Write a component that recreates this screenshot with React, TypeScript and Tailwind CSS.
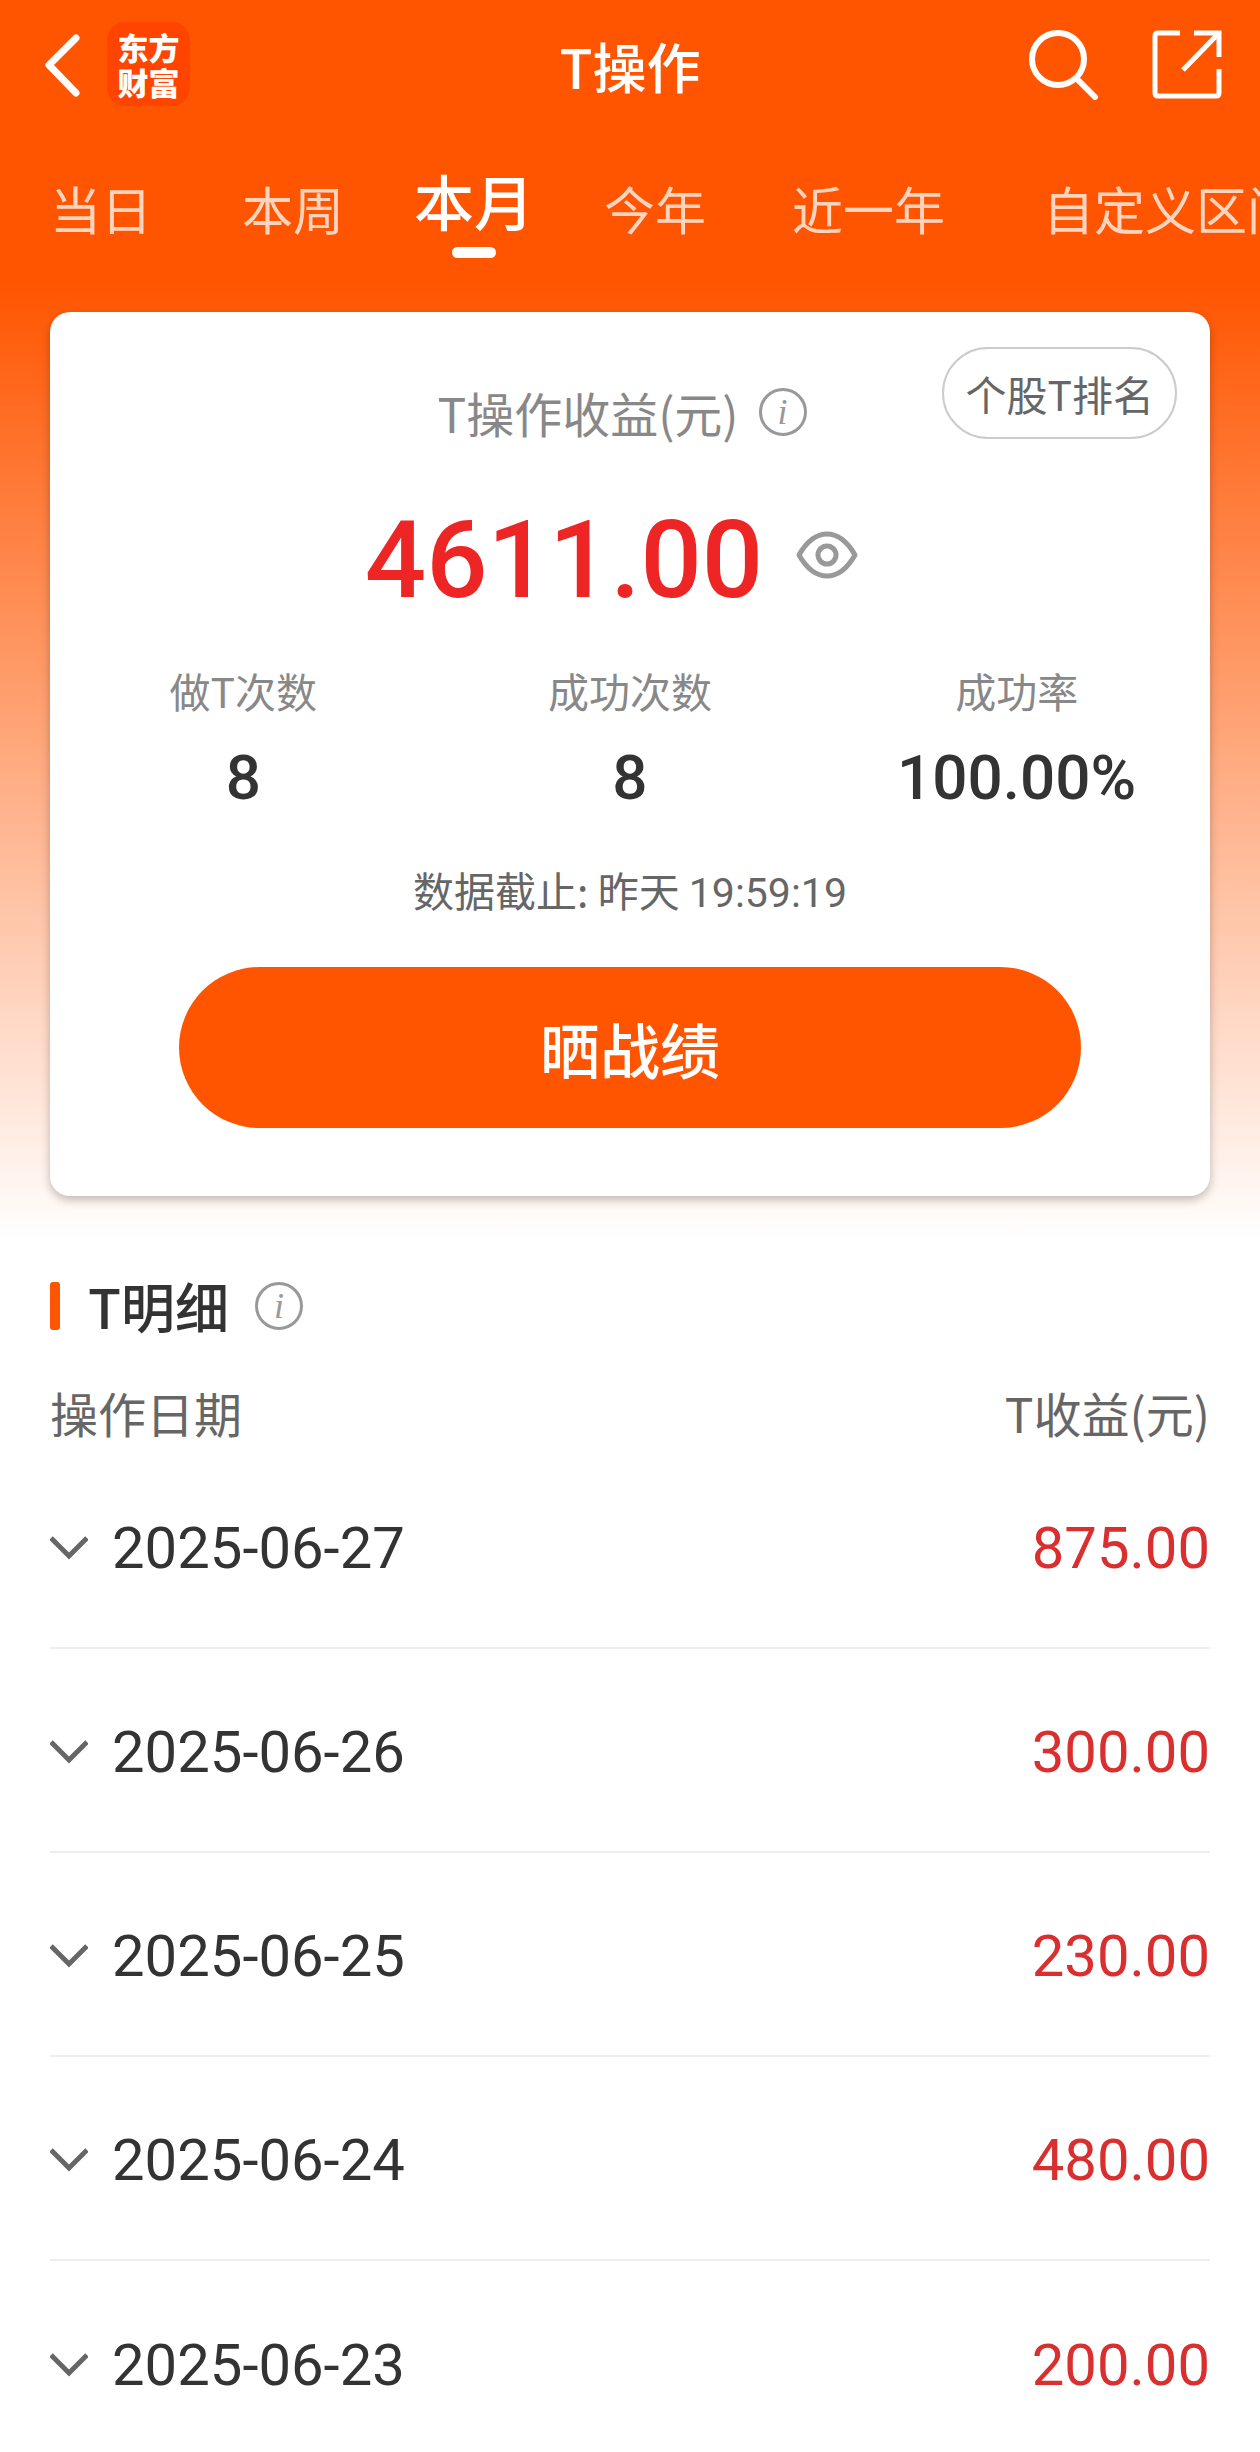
import React from "react";

const tabs = [
  { label: "当日", className: "mr-5" },
  { label: "本周", className: "" },
  { label: "本月", className: "" },
  { label: "今年", className: "" },
  { label: "近一年", className: "ml-4" },
  { label: "自定义区间", className: "ml-7" },
];

const stats = [
  { label: "做T次数", value: "8" },
  { label: "成功次数", value: "8" },
  { label: "成功率", value: "100.00%" },
];

const rows = [
  { date: "2025-06-27", profit: "875.00" },
  { date: "2025-06-26", profit: "300.00" },
  { date: "2025-06-25", profit: "230.00" },
  { date: "2025-06-24", profit: "480.00" },
  { date: "2025-06-23", profit: "200.00" },
];

function InfoButton({ label }: { label: string }) {
  return (
    <button
      type="button"
      aria-label={label}
      className="flex size-12 shrink-0 items-center justify-center rounded-full border-3 border-[#999] font-['Liberation_Serif',serif] text-[36px] leading-none text-[#999] italic"
    >
      i
    </button>
  );
}

function Header() {
  return (
    <header className="grid h-32 grid-cols-3 items-center px-[38px] text-white">
      <div className="flex items-center gap-[18px]">
        <button type="button" aria-label="返回">
          <svg width="51" height="68" viewBox="0 0 51 68" fill="none" stroke="currentColor" strokeWidth="7" strokeLinecap="round" strokeLinejoin="round">
            <path d="M38 8 11 35 38 63" />
          </svg>
        </button>
        <div className="flex h-[84px] w-[83px] flex-col items-center justify-center rounded-[18px] bg-[#ff4400] text-[31px] leading-[35px] font-black">
          <span>东方</span>
          <span>财富</span>
        </div>
      </div>
      <h1 className="pt-1 text-center text-[54px] leading-none font-medium">T操作</h1>
      <div className="flex items-center justify-end gap-[53px]">
        <button type="button" aria-label="搜索">
          <svg width="72" height="72" viewBox="0 0 72 72" fill="none" stroke="currentColor" strokeWidth="6" strokeLinecap="round">
            <circle cx="31" cy="31" r="26" />
            <path d="M50 51 68 69" />
          </svg>
        </button>
        <button type="button" aria-label="分享">
          <svg width="70" height="70" viewBox="0 0 70 70" fill="none" stroke="currentColor" strokeWidth="5">
            <path d="M28 4H6Q3 4 3 7V64Q3 67 6 67H64Q67 67 67 64V40M42 4H67V28" />
            <path d="M66 5 31 41" />
          </svg>
        </button>
      </div>
    </header>
  );
}

function Tabs() {
  return (
    <nav className="flex h-[184px] items-start gap-[70px] overflow-hidden pt-9 pl-[50px]">
      {tabs.map((tab) =>
        tab.label === "本月" ? (
          <button key={tab.label} type="button" aria-current="page" className="flex shrink-0 flex-col items-center gap-[11px] text-[60px] leading-[72px] font-medium text-white">
            {tab.label}
            <span className="h-[11px] w-11 rounded-full bg-white" />
          </button>
        ) : (
          <button key={tab.label} type="button" className={"shrink-0 pt-2 text-[51px] leading-[72px] text-white/75 " + tab.className}>
            {tab.label}
          </button>
        ),
      )}
    </nav>
  );
}

function SummaryCard() {
  return (
    <section className="relative mx-[50px] flex flex-col items-center rounded-[20px] bg-white pt-[72px] pb-[68px] shadow-[0_4px_10px_rgba(0,0,0,0.25)]">
      <button type="button" className="absolute top-[35px] right-[33px] h-[92px] rounded-full border-2 border-[#ccc] px-[21px] text-[41px] leading-none whitespace-nowrap text-[#666]">
        个股T排名
      </button>
      <div className="flex items-center gap-5 pr-4">
        <h2 className="text-[48px] leading-[56px] text-[#888]">T操作收益(元)</h2>
        <InfoButton label="收益说明" />
      </div>
      <div className="mt-[50px] flex items-center gap-8 pr-9">
        <strong className="pt-[10px] font-[Roboto,sans-serif] text-[108px] leading-[120px] font-medium text-[#ee2525]">4611.00</strong>
        <button type="button" aria-label="隐藏金额">
          <svg width="64" height="52" viewBox="0 0 64 52" fill="none" stroke="#999" strokeWidth="5">
            <path d="M4 26Q16 5 32 5T60 26Q48 47 32 47T4 26Z" strokeLinejoin="round" />
            <circle cx="32" cy="26" r="9" />
          </svg>
        </button>
      </div>
      <dl className="mt-10 grid w-full grid-cols-3 text-center">
        {stats.map((stat) => (
          <div key={stat.label}>
            <dt className="text-[41px] leading-[60px] text-[#888]">{stat.label}</dt>
            <dd className="mt-[18px] font-[Roboto,sans-serif] text-[62px] leading-[80px] font-medium text-[#333]">{stat.value}</dd>
          </div>
        ))}
      </dl>
      <p className="mt-[41px] text-[41px] leading-[60px] text-[#666]">
        数据截止: 昨天 <time className="font-[Roboto,sans-serif]">19:59:19</time>
      </p>
      <div className="w-full px-[129px] pt-11">
        <button type="button" className="h-[161px] w-full rounded-full bg-[#ff5500] text-[60px] leading-none font-medium text-white">
          晒战绩
        </button>
      </div>
    </section>
  );
}

function Details() {
  return (
    <section className="px-[50px] pt-[78px]">
      <div className="flex h-16 items-center">
        <span className="h-12 w-[10px] rounded-[3px] bg-[#ff5500]" />
        <h2 className="ml-7 text-[54px] leading-none font-medium text-[#333]">T明细</h2>
        <div className="ml-[26px] flex">
          <InfoButton label="明细说明" />
        </div>
      </div>
      <table className="mt-[42px] w-full">
        <thead>
          <tr className="text-[48px] leading-[64px] text-[#666]">
            <th scope="col" className="text-left font-normal">操作日期</th>
            <th scope="col" className="text-right font-normal">T收益(元)</th>
          </tr>
        </thead>
        <tbody className="font-[Roboto,sans-serif]">
          {rows.map((row) => (
            <tr key={row.date} className="h-[204px] border-b-2 border-[#eee] text-[58px] leading-none last:border-b-0">
              <td className="pt-1 text-[#333]">
                <button type="button" aria-expanded="false" className="flex items-center gap-6">
                  <svg width="38" height="28" viewBox="0 0 38 28" fill="none" stroke="#666" strokeWidth="5">
                    <path d="M1 4 19 22 37 4" />
                  </svg>
                  {row.date}
                </button>
              </td>
              <td className="pt-1 text-right text-[#d92f2f]">{row.profit}</td>
            </tr>
          ))}
        </tbody>
      </table>
    </section>
  );
}

export default function App() {
  return (
    <main className="min-h-screen overflow-hidden bg-white bg-[linear-gradient(#ff5500_280px,#ffffff_1240px)] font-['Noto_Sans_CJK_SC',sans-serif]">
      <Header />
      <Tabs />
      <SummaryCard />
      <Details />
    </main>
  );
}
